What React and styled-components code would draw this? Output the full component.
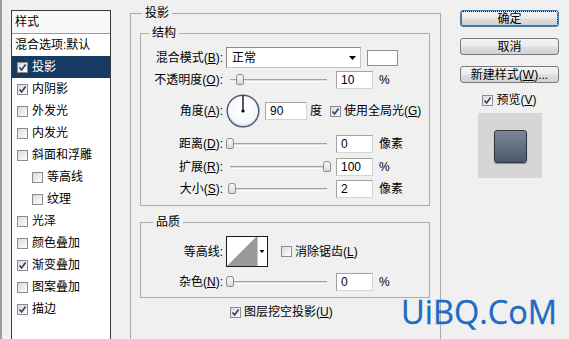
import React from 'react';
import styled, { createGlobalStyle } from 'styled-components';

const Global = createGlobalStyle`
  html, body { margin: 0; padding: 0; background: #f0f0f0; }
  body {
    font-family: "Liberation Sans", "Noto Sans CJK SC", sans-serif;
    font-size: 12px;
    line-height: 14px;
    color: #000;
  }
  * { box-sizing: border-box; }
`;

const Page = styled.div`
  position: relative;
  display: flex;
  align-items: flex-start;
  width: 569px;
  height: 339px;
  overflow: hidden;
  background: #f0f0f0;
  border-left: 2px solid #9c9c9c;
`;

/* ---------- left style list ---------- */
const StylePanel = styled.div`
  flex: none;
  width: 100px;
  height: 340px;
  margin: 10px 0 0 9px;
  background: #fff;
  border: 1px solid #3a3a3a;
  border-bottom: none;
  display: flex;
  flex-direction: column;
`;

const PanelHeader = styled.div`
  height: 23px;
  padding-left: 3px;
  display: flex;
  align-items: center;
  background: #f9f9f9;
  border-bottom: 1px solid #9a9a9a;
`;

const LayerRow = styled.div`
  height: 22px;
  display: flex;
  align-items: center;
  gap: 4px;
  padding-left: ${p => p.$pad}px;
  background: ${p => (p.$selected ? '#173a63' : 'transparent')};
  color: ${p => (p.$selected ? '#fff' : '#000')};
  white-space: nowrap;
`;

/* ---------- checkbox ---------- */
const Box = styled.span`
  flex: none;
  width: 11px;
  height: 11px;
  border: 1px solid #8c8c8c;
  background: linear-gradient(135deg, #d9dadc 0%, #f4f4f4 70%, #ffffff 100%);
  display: inline-flex;
  align-items: center;
  justify-content: center;
`;

const Check = ({ checked }) => (
  <Box>
    {checked && (
      <svg width="9" height="9" viewBox="0 0 9 9">
        <path d="M1.5 4.5 L3.6 7 L7.6 1.6" fill="none" stroke="#2a4370" strokeWidth="1.7" />
      </svg>
    )}
  </Box>
);

const CheckLabel = styled.label`
  display: inline-flex;
  align-items: center;
  gap: 3px;
  margin-left: ${p => p.$ml || 0}px;
  white-space: nowrap;
`;

const U = styled.span`
  text-decoration: underline;
`;

/* ---------- middle groups ---------- */
const Middle = styled.div`
  flex: none;
  width: 311px;
  height: 340px;
  margin: 13px 0 0 19px;
  position: relative;
  border: 1px solid #ababab;
  border-bottom: none;
  padding: 19px 10px 0 9px;
  display: flex;
  flex-direction: column;
`;

const Group = styled.div`
  position: relative;
  height: ${p => p.$h}px;
  margin-top: ${p => p.$mt || 0}px;
  border: 1px solid #ababab;
  display: flex;
  flex-direction: column;
`;

const Legend = styled.span`
  position: absolute;
  top: -8px;
  left: ${p => p.$left}px;
  padding: 0 3px;
  background: #f0f0f0;
  line-height: 14px;
`;

const Row = styled.div`
  display: flex;
  align-items: center;
  height: ${p => p.$h}px;
  margin-top: ${p => p.$mt || 0}px;
  padding-left: ${p => p.$pl || 0}px;
`;

const Label = styled.span`
  flex: none;
  width: 82px;
  text-align: right;
  white-space: nowrap;
`;

const Select = styled.div`
  flex: none;
  margin-left: 3px;
  width: 135px;
  height: 21px;
  background: #fff;
  border: 1px solid #8a8a8a;
  border-right-color: #c4c4c4;
  border-bottom-color: #c4c4c4;
  padding: 0 4px 0 5px;
  display: flex;
  align-items: center;
  justify-content: space-between;
`;

const ColorSwatch = styled.div`
  flex: none;
  margin-left: 6px;
  width: 31px;
  height: 16px;
  background: #fff;
  border: 1px solid #8e8e8e;
`;

const Input = styled.div`
  flex: none;
  margin-left: ${p => p.$ml}px;
  width: ${p => p.$w}px;
  height: 18px;
  background: #fff;
  border: 1px solid #a3a3a3;
  border-right-color: #d4d4d4;
  border-bottom-color: #d4d4d4;
  padding-left: 4px;
  display: flex;
  align-items: center;
`;

const Unit = styled.span`
  flex: none;
  margin-left: ${p => p.$ml}px;
  white-space: nowrap;
`;

const SliderWrap = styled.div`
  flex: none;
  position: relative;
  margin-left: 3px;
  width: 104px;
  height: 14px;
`;

const Track = styled.div`
  position: absolute;
  left: 4px;
  right: 3px;
  top: 6px;
  height: 3px;
  border-top: 1px solid #a2a2a2;
  border-bottom: 1px solid #ffffff;
  background: #dcdcdc;
`;

const Thumb = styled.div`
  position: absolute;
  top: 1px;
  width: 8px;
  height: 11px;
  border: 1px solid #8c8c8c;
  border-radius: 3px 3px 2px 2px;
  background: linear-gradient(#fafafa, #dadada);
`;

const Slider = ({ value, max }) => {
  const start = 4;
  const len = 97;
  const center = start + (value / max) * len;
  return (
    <SliderWrap>
      <Track />
      <Thumb style={{ left: `${Math.round(center - 4)}px` }} />
    </SliderWrap>
  );
};

const DialBox = styled.div`
  flex: none;
  margin-left: 3px;
  width: 34px;
  height: 34px;
`;

const Dial = () => (
  <DialBox>
    <svg width="34" height="34" viewBox="0 0 34 34">
      <defs>
        <radialGradient id="dg" cx="50%" cy="45%" r="55%">
          <stop offset="0%" stopColor="#ffffff" />
          <stop offset="80%" stopColor="#f6f7f9" />
          <stop offset="100%" stopColor="#c9ced8" />
        </radialGradient>
      </defs>
      <circle cx="17" cy="17" r="15.8" fill="url(#dg)" stroke="#4d5874" strokeWidth="1.4" />
      <line x1="17" y1="17" x2="17" y2="1.5" stroke="#000" strokeWidth="1.3" />
      <circle cx="17" cy="17" r="1.6" fill="#000" />
    </svg>
  </DialBox>
);

const ContourBox = styled.div`
  flex: none;
  margin-left: 3px;
  width: 42px;
  height: 31px;
  border: 1px solid #1a1a1a;
  background: #fff;
  display: flex;
`;

const Contour = () => (
  <ContourBox>
    <svg width="40" height="29" viewBox="0 0 40 29">
      <polygon points="0,29 29,0 30,0 30,29" fill="#9a9a9a" />
      <line x1="30.5" y1="0" x2="30.5" y2="29" stroke="#c8c8c8" />
      <polygon points="32.5,13 37.5,13 35,16" fill="#000" />
    </svg>
  </ContourBox>
);

/* ---------- right column ---------- */
const RightCol = styled.div`
  flex: none;
  width: 99px;
  margin: 10px 0 0 19px;
  display: flex;
  flex-direction: column;
  align-items: center;
  gap: 11px;
`;

const Button = styled.div`
  width: 99px;
  height: 17px;
  border: 1px solid ${p => (p.$default ? '#4b7ca8' : '#7a7a7a')};
  border-radius: 3px;
  background: linear-gradient(#f4f4f4 0%, #ececec 48%, #dedede 52%, #d2d2d2 100%);
  display: flex;
  align-items: center;
  justify-content: center;
  white-space: nowrap;
  outline: ${p => (p.$default ? '1px dotted #000' : 'none')};
  outline-offset: -2px;
`;

const PreviewRow = styled.div`
  display: flex;
  justify-content: center;
  height: 14px;
  margin-top: -1px;
`;

const PreviewBox = styled.div`
  width: 64px;
  height: 65px;
  margin-top: -5px;
  background: #d6d6d6;
  display: flex;
  align-items: center;
  justify-content: center;
`;

const PreviewSquare = styled.div`
  width: 33px;
  height: 33px;
  margin: 2px 0 0 1px;
  border-radius: 3px;
  border: 1px solid #2f3640;
  background: linear-gradient(#7a8899 0%, #5f6d7e 55%, #4c5868 100%);
  box-shadow: 0 1px 1px rgba(0, 0, 0, 0.35);
`;

const Watermark = styled.div`
  position: absolute;
  left: 399px;
  top: 296px;
  font-family: "Open Sans", "Liberation Sans", sans-serif;
  font-size: 32.5px;
  line-height: 32px;
  color: #1c6cc3;
  -webkit-text-stroke: 0.3px #1c6cc3;
`;

const layers = [
  { name: '投影', checked: true, selected: true },
  { name: '内阴影', checked: true },
  { name: '外发光' },
  { name: '内发光' },
  { name: '斜面和浮雕' },
  { name: '等高线', indent: true },
  { name: '纹理', indent: true },
  { name: '光泽' },
  { name: '颜色叠加' },
  { name: '渐变叠加', checked: true },
  { name: '图案叠加' },
  { name: '描边', checked: true },
];

export default function App() {
  return (
    <>
      <Global />
      <Page>
        <StylePanel>
          <PanelHeader>样式</PanelHeader>
          <LayerRow $pad={3}>混合选项:默认</LayerRow>
          {layers.map(l => (
            <LayerRow key={l.name} $pad={l.indent ? 20 : 5} $selected={l.selected}>
              <Check checked={l.checked} />
              {l.name}
            </LayerRow>
          ))}
        </StylePanel>

        <Middle>
          <Legend $left={11}>投影</Legend>
          <Group $h={173}>
            <Legend $left={8}>结构</Legend>
            <Row $h={21} $mt={13}>
              <Label>混合模式(<U>B</U>):</Label>
              <Select>
                <span>正常</span>
                <svg width="7" height="4" viewBox="0 0 7 4">
                  <polygon points="0,0 7,0 3.5,4" fill="#000" />
                </svg>
              </Select>
              <ColorSwatch />
            </Row>
            <Row $h={24}>
              <Label>不透明度(<U>O</U>):</Label>
              <Slider value={10} max={100} />
              <Input $ml={6} $w={37}>10</Input>
              <Unit $ml={6}>%</Unit>
            </Row>
            <Row $h={38}>
              <Label>角度(<U>A</U>):</Label>
              <Dial />
              <Input $ml={5} $w={42}>90</Input>
              <Unit $ml={3}>度</Unit>
              <CheckLabel $ml={8}>
                <Check checked />
                <span>使用全局光(<U>G</U>)</span>
              </CheckLabel>
            </Row>
            <Row $h={27}>
              <Label>距离(<U>D</U>):</Label>
              <Slider value={0} max={100} />
              <Input $ml={6} $w={37}>0</Input>
              <Unit $ml={6}>像素</Unit>
            </Row>
            <Row $h={19}>
              <Label>扩展(<U>R</U>):</Label>
              <Slider value={100} max={100} />
              <Input $ml={6} $w={37}>100</Input>
              <Unit $ml={6}>%</Unit>
            </Row>
            <Row $h={26}>
              <Label>大小(<U>S</U>):</Label>
              <Slider value={2} max={100} />
              <Input $ml={6} $w={37}>2</Input>
              <Unit $ml={6}>像素</Unit>
            </Row>
          </Group>

          <Group $h={76} $mt={16}>
            <Legend $left={12}>品质</Legend>
            <Row $h={31} $mt={13}>
              <Label>等高线:</Label>
              <Contour />
              <CheckLabel $ml={13}>
                <Check />
                <span>消除锯齿(<U>L</U>)</span>
              </CheckLabel>
            </Row>
            <Row $h={23} $mt={3}>
              <Label>杂色(<U>N</U>):</Label>
              <Slider value={0} max={100} />
              <Input $ml={6} $w={37}>0</Input>
              <Unit $ml={6}>%</Unit>
            </Row>
          </Group>

          <Row $h={14} $mt={7} $pl={90}>
            <CheckLabel>
              <Check checked />
              <span>图层挖空投影(<U>U</U>)</span>
            </CheckLabel>
          </Row>
        </Middle>

        <RightCol>
          <Button $default>确定</Button>
          <Button>取消</Button>
          <Button>新建样式(<U>W</U>)...</Button>
          <PreviewRow>
            <CheckLabel>
              <Check checked />
              <span>预览(<U>V</U>)</span>
            </CheckLabel>
          </PreviewRow>
          <PreviewBox>
            <PreviewSquare />
          </PreviewBox>
        </RightCol>

        <Watermark>UiBQ.CoM</Watermark>
      </Page>
    </>
  );
}
